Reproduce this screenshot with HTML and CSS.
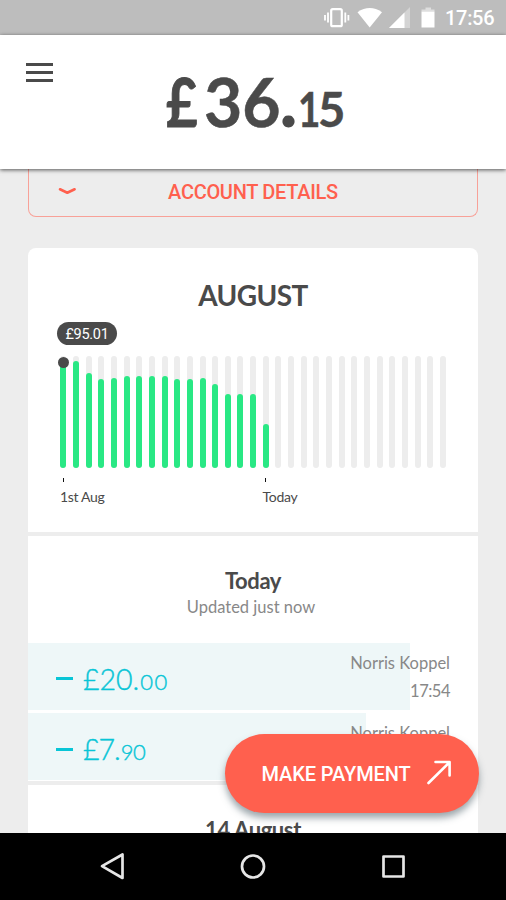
FILE: index.html
```html
<!DOCTYPE html>
<html lang="en">
<head>
<meta charset="utf-8">
<title>Account</title>
<link rel="stylesheet" href="styles.css">
</head>
<body>
<div class="phone">
  <div class="status">
    <svg class="status-icons" width="112" height="35" viewBox="0 0 112 35" fill="#fff">
      <rect x="7.2" y="9.2" width="10.6" height="17" rx="1.5" fill="none" stroke="#fff" stroke-width="2.2"/>
      <path d="M4 12.500v10M21.300 12.500v10M1 15v5.500M24.400 15v5.500" stroke="#fff" stroke-width="1.800"/>
      <path d="M33.500 12.200Q45.700 4 58 12.200L45.700 27.500Z"/>
      <path d="M65 28L86 7V28Z" opacity=".35"/>
      <path d="M65 28L80.500 12.500V28Z"/>
      <path d="M101.500 7.500h5.500v2h3.500v2H97.500v-2h4z" opacity=".5"/>
      <path d="M97.500 11.500h13V27.500h-13z"/>
    </svg>
    <span class="clock">17:56</span>
  </div>
  <header class="header">
    <div class="burger"><i></i><i></i><i></i></div>
    <div class="balance"><span class="pound">£</span><span class="whole">36</span><span class="point">.</span><span class="one">1</span><span class="cents">5</span></div>
  </header>
  <main class="content">
    <div class="details">
      <svg class="chevron" width="20" height="12" viewBox="0 0 20 12" fill="none" stroke="#ff604e" stroke-width="2.600" stroke-linecap="round" stroke-linejoin="round"><path d="M3 3.300L10.300 6.700L17.600 3.300"/></svg>
      <span>ACCOUNT DETAILS</span>
    </div>
    <div class="card">
      <section class="month">
        <h1>AUGUST</h1>
        <div class="pill">£95.01</div>
        <div class="chart" id="chart"></div>
        <div class="axis"><div class="tick">1st Aug</div><div class="tick">Today</div></div>
      </section>
      <section class="day">
        <h2>Today</h2>
        <p class="updated">Updated just now</p>
        <div class="row">
          <div class="fill first"><i class="minus"></i><span class="amount">£20.<small>00</small></span></div>
          <div class="who"><p>Norris Koppel</p><p class="time">17:54</p></div>
        </div>
        <div class="row">
          <div class="fill second"><i class="minus"></i><span class="amount seven">£7.<small>90</small></span></div>
          <div class="who"><p>Norris Koppel</p></div>
        </div>
      </section>
      <section class="next"><h2 class="date">14 August</h2></section>
    </div>
  </main>
  <button class="pay"><span>MAKE PAYMENT</span>
    <svg width="26" height="26" viewBox="0 0 26 26" fill="none" stroke="#fff" stroke-width="2.600" stroke-linecap="round" stroke-linejoin="round"><path d="M1.500 24L22.500 3.300M8.500 3H22.600V16.500"/></svg>
  </button>
  <nav class="nav">
    <svg width="506" height="67" viewBox="0 0 506 67" fill="none" stroke="#e6e6e6" stroke-width="2.700" stroke-linejoin="round">
      <path d="M122.500 21.500V45L102 33.200Z"/>
      <circle cx="253" cy="33.500" r="11"/>
      <rect x="383.500" y="23.500" width="20" height="20"/>
    </svg>
  </nav>
</div>
<script src="chart.js"></script>
</body>
</html>
```
FILE: styles.css
```css
* { box-sizing: border-box; }
body { margin: 0; font-family: Lato, sans-serif; color: #4a4a4a; }
h1, h2, p { margin: 0; }
.phone { position: relative; width: 506px; height: 900px; overflow: hidden; background: #ededed; display: flex; flex-direction: column; }
.status { height: 35px; flex: none; background: #bdbdbd; color: #fff; display: flex; align-items: center; padding-left: 324px; font: 500 20px/36px Roboto, sans-serif; }
.status-icons { flex: none; }
.clock { margin-left: 9px; padding-top: 1px; white-space: nowrap; letter-spacing: -0.3px; }
.header { position: relative; z-index: 2; height: 134px; flex: none; background: #fff; box-shadow: 0 1px 4px rgba(0,0,0,.65); display: flex; padding: 28px 0 0 26px; }
.burger { width: 27px; display: flex; flex-direction: column; gap: 5px; }
.burger i { height: 3px; background: #4a4a4a; }
.balance { display: flex; align-items: baseline; margin: -7px 0 0 113px; font-weight: 700; height: 80px; line-height: 80px; }
.pound { font-size: 66px; width: 38px; transform: scaleX(.82); transform-origin: 0 50%; -webkit-text-stroke: 1px #4a4a4a; }
.whole { font-size: 66px; width: 76px; -webkit-text-stroke: .5px #4a4a4a; }
.point { font-size: 80px; width: 19px; margin-left: -1px; }
.one, .cents { font-size: 47px; -webkit-text-stroke: .5px #4a4a4a; }
.one { width: 23px; transform: scaleX(.82); transform-origin: 0 50%; }
.cents { margin-left: -3px; }
.content { height: 664px; flex: none; overflow: hidden; padding: 0 28px; }
.details { height: 47.500px; border: 1.500px solid #f8a198; border-top: 0; border-radius: 0 0 8px 8px; position: relative; text-align: center; font: 500 20px/46px Roboto, sans-serif; letter-spacing: -0.3px; color: #ff604e; }
.chevron { position: absolute; left: 28px; top: 17px; }
.card { margin-top: 31px; background: #fff; border-radius: 8px 8px 0 0; }
.month { height: 288px; border-bottom: 4px solid #ededed; padding: 30px 32px 0; }
h1 { font-size: 28px; line-height: 34px; letter-spacing: -.6px; font-weight: 700; text-align: center; }
.pill { width: 60px; height: 23px; margin: 10px 0 0 -3px; border-radius: 12px; background: #4a4a4a; color: #fff; text-align: center; font: 14.500px/25px Roboto, sans-serif; letter-spacing: -.3px; }
.chart { height: 112px; margin: 11.500px -0.200px 0 0.300px; display: flex; justify-content: space-between; }
.track { position: relative; width: 6px; background: #ededed; border-radius: 3px; display: flex; align-items: flex-end; }
.bar { width: 6px; border-radius: 3px; background: #29e884; }
.dot { position: absolute; left: -2.500px; top: 1px; width: 11px; height: 11px; border-radius: 50%; background: #4a4a4a; }
.axis { display: grid; grid-template-columns: 202.500px 1fr; margin-top: 10px; font-size: 14px; line-height: 20px; letter-spacing: -.3px; }
.tick::before { content: ""; display: block; width: 1px; height: 4px; margin: 0 0 5px 2.500px; background: #111; }
.day { height: 249px; border-bottom: 4px solid #ededed; padding-top: 31px; }
h2 { font-size: 22px; line-height: 28px; text-align: center; font-weight: 700; letter-spacing: -.4px; }
.updated { font-size: 16.500px; line-height: 22px; color: #888; text-align: center; margin: 1px 4px 25px 0; }
.row { position: relative; height: 67px; margin-bottom: 3.500px; display: flex; }
.fill { background: #eef7f8; display: flex; align-items: center; padding: 8px 0 0 28px; color: #08c5d6; }
.first { width: 382px; }
.second { width: 337.500px; }
.minus { width: 17px; height: 3px; background: #08c5d6; margin: -3px 10px 0 0; }
.amount { font-size: 28.500px; font-weight: 300; line-height: 36px; -webkit-text-stroke: .4px #08c5d6; }
.amount small { font-size: 22px; letter-spacing: 1.500px; margin-left: 1px; }
.seven { letter-spacing: -1px; }
.seven small { letter-spacing: -.5px; }
.who { position: absolute; right: 28px; top: 6px; text-align: right; font-size: 16.500px; line-height: 28px; color: #888; }
.time { letter-spacing: -.5px; }
.next { height: 60px; padding-top: 31px; }
.pay { position: absolute; left: 225px; top: 734px; width: 254px; height: 79px; border: 0; border-radius: 40px; background: #ff604e; color: #fff; box-shadow: 0 5px 7px rgba(60,80,90,.5); display: flex; align-items: center; padding: 0 0 0 36.500px; font: 500 20px/24px Roboto, sans-serif; letter-spacing: -.1px; white-space: nowrap; }
.pay span { width: 165px; text-align: left; padding-top: 1px; }
.pay svg { margin-top: -3px; }
.nav { position: relative; z-index: 3; height: 67px; background: #000; flex: none; }
.nav svg { display: block; }
```
FILE: chart.js
```js
// Bar heights in pixels for each day of the month so far.
const balances = [107, 107, 95, 89, 90, 92, 92, 92, 92, 89, 89, 90, 84.5, 74, 74, 74, 44.5];
const chart = document.getElementById('chart');
for (let day = 0; day < 31; day++) {
  const track = document.createElement('div');
  track.className = 'track';
  if (day < balances.length) {
    const bar = document.createElement('div');
    bar.className = 'bar';
    bar.style.height = balances[day] + 'px';
    track.append(bar);
  }
  if (day === 0) {
    const dot = document.createElement('div');
    dot.className = 'dot';
    track.append(dot);
  }
  chart.append(track);
}
```
